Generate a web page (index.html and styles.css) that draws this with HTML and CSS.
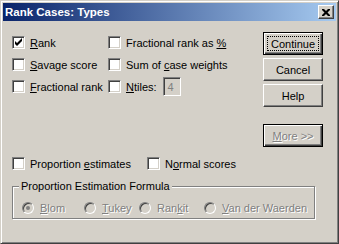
FILE: index.html
```html
<!DOCTYPE html>
<html lang="en">
<head>
  <meta charset="UTF-8">
  <title>Rank Cases: Types</title>
  <link rel="stylesheet" href="styles.css">
</head>
<body>
  <div class="window">
    <div class="title-bar">
      <span class="title">Rank Cases: Types</span>
      <button class="close-btn">
        <svg width="8" height="7" viewBox="0 0 8 7"><path d="M0 0h2l2 2 2-2h2v1l-2.5 2.5 2.5 2.5v1h-2l-2-2-2 2h-2v-1l2.5-2.5-2.5-2.5z" fill="#000"/></svg>
      </button>
    </div>

    <div class="dialog-body">
      <div class="top">
        <div class="options">
          <div class="row">
            <label class="check col-a"><span class="box checked"><svg width="9" height="9" viewBox="0 0 9 9"><path d="M1 3v3l2 2 5-5v-3l-5 5z" fill="#000"/></svg></span><span><u>R</u>ank</span></label>
            <label class="check"><span class="box"></span><span>Fractional rank as <u>%</u></span></label>
          </div>
          <div class="row">
            <label class="check col-a"><span class="box"></span><span><u>S</u>avage score</span></label>
            <label class="check"><span class="box"></span><span>Sum of <u>c</u>ase weights</span></label>
          </div>
          <div class="row">
            <label class="check col-a"><span class="box"></span><span><u>F</u>ractional rank</span></label>
            <label class="check"><span class="box"></span><span><u>N</u>tiles:</span></label>
            <span class="ntiles">4</span>
          </div>
        </div>

        <div class="buttons">
          <button class="btn default">Continue</button>
          <button class="btn">Cancel</button>
          <button class="btn">Help</button>
          <button class="btn disabled more"><span><u>M</u>ore &gt;&gt;</span></button>
        </div>
      </div>

      <div class="row props">
        <label class="check col-b"><span class="box"></span><span>Proportion <u>e</u>stimates</span></label>
        <label class="check"><span class="box"></span><span>N<u>o</u>rmal scores</span></label>
      </div>

      <fieldset class="group">
        <legend>Proportion Estimation Formula</legend>
        <div class="radios">
          <label class="radio r-blom"><span class="dot on"></span><span><u>B</u>lom</span></label>
          <label class="radio r-tukey"><span class="dot"></span><span><u>T</u>ukey</span></label>
          <label class="radio r-rankit"><span class="dot"></span><span>Ran<u>k</u>it</span></label>
          <label class="radio"><span class="dot"></span><span><u>V</u>an der Waerden</span></label>
        </div>
      </fieldset>
    </div>
  </div>
</body>
</html>
```

FILE: styles.css
```css
body {
  margin: 0;
  font-family: "Liberation Sans", Arial, sans-serif;
  font-size: 11px;
  color: #000;
  background: #d4d0c8;
}

.window {
  width: 339px;
  height: 244px;
  box-sizing: border-box;
  background: #d4d0c8;
  border: 1px solid;
  border-color: #d4d0c8 #404040 #404040 #d4d0c8;
  padding: 2px;
  box-shadow: inset 1px 1px #fff, inset -1px -1px #808080;
}

/* title bar */
.title-bar {
  height: 18px;
  display: flex;
  align-items: center;
  justify-content: space-between;
  padding: 0 2px 0 2px;
  background: linear-gradient(to right, #0a246a, #a6caf0);
}

.title {
  color: #fff;
  font-weight: bold;
  font-size: 11.5px;
}

.close-btn {
  width: 16px;
  height: 14px;
  padding: 0;
  display: flex;
  align-items: center;
  justify-content: center;
  background: #d4d0c8;
  border: 1px solid;
  border-color: #fff #404040 #404040 #fff;
  box-shadow: inset -1px -1px #808080;
}

/* body */
.dialog-body {
  padding: 11px 0 0 9px;
}

.top {
  display: flex;
}

.options {
  width: 251px;
  margin-top: 4px;
  display: flex;
  flex-direction: column;
  gap: 9px;
}

.row {
  display: flex;
  align-items: center;
  height: 13px;
}

.col-a {
  width: 96px;
}

.col-b {
  width: 135px;
}

.check {
  display: flex;
  align-items: center;
  gap: 5px;
  white-space: nowrap;
}

.box {
  width: 13px;
  height: 13px;
  box-sizing: border-box;
  background: #fff;
  border: 1px solid;
  border-color: #808080 #fff #fff #808080;
  box-shadow: inset 1px 1px #404040, inset -1px -1px #d4d0c8;
  display: flex;
  align-items: center;
  justify-content: center;
}

.ntiles {
  width: 18px;
  height: 19px;
  box-sizing: border-box;
  margin-left: 6px;
  padding: 3px 0 0 4px;
  color: #808080;
  background: #d4d0c8;
  border: 1px solid;
  border-color: #808080 #fff #fff #808080;
  box-shadow: inset 1px 1px #404040, inset -1px -1px #d4d0c8;
}

/* buttons */
.buttons {
  display: flex;
  flex-direction: column;
  gap: 3px;
}

.btn {
  width: 60px;
  height: 23px;
  padding: 0;
  font-family: inherit;
  font-size: 11px;
  color: #000;
  background: #d4d0c8;
  border: 1px solid;
  border-color: #fff #404040 #404040 #fff;
  box-shadow: inset -1px -1px #808080;
}

.btn.default {
  border-color: #000;
  box-shadow: inset 1px 1px #fff, inset -1px -1px #404040, inset -2px -2px #808080;
  outline: 1px dotted #000;
  outline-offset: -5px;
}

.btn.more {
  margin-top: 14px;
  border-color: #000;
  box-shadow: inset 1px 1px #fff, inset -1px -1px #404040, inset -2px -2px #808080;
}

.btn.disabled {
  color: #808080;
  text-shadow: 1px 1px #fff;
}

/* lower part */
.props {
  margin-top: 10px;
}

.group {
  width: 303px;
  height: 39px;
  box-sizing: border-box;
  margin: 10px 0 0 0;
  padding: 0;
  border: 1px solid #808080;
  box-shadow: 1px 1px #fff, inset 1px 1px #fff;
  position: relative;
}

.group legend {
  margin-left: 6px;
  padding: 0 2px;
  line-height: 13px;
  background: #d4d0c8;
}

.radios {
  display: flex;
  align-items: center;
  height: 12px;
  margin: 9px 0 0 9px;
  color: #808080;
  text-shadow: 1px 1px #fff;
}

.radio {
  display: flex;
  align-items: center;
  gap: 6px;
  white-space: nowrap;
}

.r-blom {
  width: 62px;
}

.r-tukey {
  width: 55px;
}

.r-rankit {
  width: 65px;
}

.dot {
  width: 12px;
  height: 12px;
  box-sizing: border-box;
  border-radius: 50%;
  background: #d4d0c8;
  border: 1px solid;
  border-color: #808080 #fff #fff #808080;
  box-shadow: inset 1px 1px #404040;
  display: flex;
  align-items: center;
  justify-content: center;
}

.dot.on::after {
  content: "";
  width: 4px;
  height: 4px;
  border-radius: 50%;
  background: #808080;
}
```
